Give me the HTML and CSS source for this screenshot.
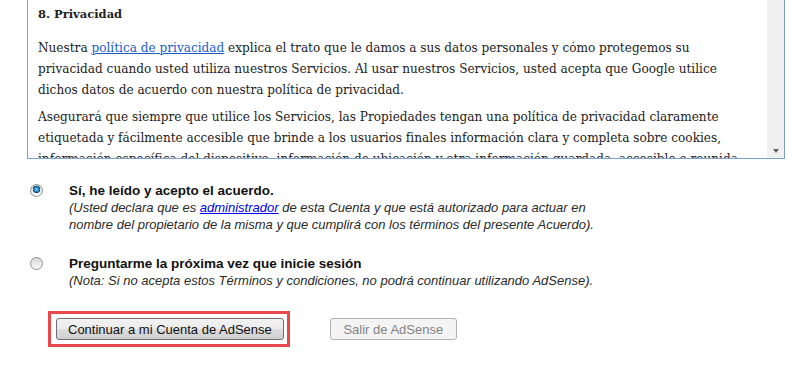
FILE: index.html
```html
<!DOCTYPE html>
<html lang="es">
<head>
    <meta charset="UTF-8">
    <title>Términos y condiciones de AdSense</title>
    <link rel="stylesheet" href="styles.css">
</head>
<body>

<div class="terms">
    <div class="terms-text">
        <h3>8. Privacidad</h3>
        <p>Nuestra <a href="#">política de privacidad</a> explica el trato que le damos a sus datos personales y cómo protegemos su<br>
        privacidad cuando usted utiliza nuestros Servicios. Al usar nuestros Servicios, usted acepta que Google utilice<br>
        dichos datos de acuerdo con nuestra política de privacidad.</p>
        <p>Asegurará que siempre que utilice los Servicios, las Propiedades tengan una política de privacidad claramente<br>
        etiquetada y fácilmente accesible que brinde a los usuarios finales información clara y completa sobre cookies,<br>
        información específica del dispositivo, información de ubicación y otra información guardada, accesible o reunida</p>
    </div>
    <div class="scrollbar"><span class="arrow-down"></span></div>
</div>

<form class="accept">
    <label class="option">
        <input type="radio" name="agree" class="radio" checked>
        <span class="option-text">
            <strong>Sí, he leído y acepto el acuerdo.</strong>
            <em>(Usted declara que es <a href="#">administrador</a> de esta Cuenta y que está autorizado para actuar en<br>
            nombre del propietario de la misma y que cumplirá con los términos del presente Acuerdo).</em>
        </span>
    </label>
    <label class="option">
        <input type="radio" name="agree" class="radio">
        <span class="option-text">
            <strong>Preguntarme la próxima vez que inicie sesión</strong>
            <em>(Nota: Si no acepta estos Términos y condiciones, no podrá continuar utilizando AdSense).</em>
        </span>
    </label>

    <div class="actions">
        <div class="highlight">
            <button type="button" class="btn">Continuar a mi Cuenta de AdSense</button>
        </div>
        <button type="button" class="btn" disabled>Salir de AdSense</button>
    </div>
</form>

</body>
</html>
```

FILE: styles.css
```css
body {
    margin: 0;
    background-color: #ffffff;
    font-family: "Liberation Sans", Arial, sans-serif;
    color: #222222;
}
.terms {
    display: flex;
    width: 758px;
    height: 160px;
    margin: -1px 0 0 27px;
    box-sizing: border-box;
    border: 1px solid #7d9fd2;
    overflow: hidden;
}
.terms-text {
    flex: 1;
    padding: 0 10px;
    overflow: hidden;
    font-family: "DejaVu Serif", Cambria, serif;
    font-size: 12.1px;
    line-height: 21px;
    color: #222222;
}
.terms-text h3 {
    margin: 4px 0 14px;
    font-size: 11.5px;
    line-height: 20px;
}
.terms-text p {
    margin: 0 0 6px;
    white-space: nowrap;
}
.terms-text a {
    color: #1a5dc9;
}
.scrollbar {
    display: flex;
    flex-direction: column;
    justify-content: flex-end;
    align-items: center;
    width: 17px;
    padding-bottom: 5px;
    box-sizing: border-box;
    background-color: #f0f0f0;
}
.arrow-down {
    width: 0;
    height: 0;
    border-left: 3.5px solid transparent;
    border-right: 3.5px solid transparent;
    border-top: 4px solid #5f5f5f;
}
.accept {
    margin: 23px 0 0;
}
.option {
    display: flex;
    align-items: flex-start;
    gap: 26px;
    padding-left: 30px;
    margin-bottom: 22px;
}
.radio {
    appearance: none;
    flex: none;
    width: 13px;
    height: 13px;
    margin: 2px 0 0;
    border: 1px solid #8e8f8f;
    border-radius: 50%;
    box-sizing: border-box;
    background: linear-gradient(#d6d6d6, #fbfbfb);
}
.radio:checked {
    background:
        radial-gradient(circle at 50% 40%, #8fdcf8 0, #2a8cc8 2px, #114a7e 3.5px, transparent 4px),
        linear-gradient(#d6d6d6, #fbfbfb);
}
.option-text {
    display: flex;
    flex-direction: column;
}
.option-text strong {
    font-size: 13.5px;
    line-height: 17px;
    color: #111111;
}
.option-text em {
    font-size: 13px;
    line-height: 17px;
    color: #2a2a2a;
}
.option-text a {
    color: #0000ee;
}
.actions {
    display: flex;
    align-items: center;
    gap: 40px;
    margin: 15px 0 0 48px;
}
.highlight {
    display: flex;
    padding: 4px 3px 4px 5px;
    border: 3px solid #e8484a;
}
.btn {
    height: 22px;
    padding: 0 11px;
    font-family: "Liberation Sans", Arial, sans-serif;
    font-size: 13px;
    color: #111111;
    border: 1px solid #707070;
    border-radius: 3px;
    background: linear-gradient(#f2f2f2 0, #ebebeb 50%, #dddddd 51%, #cfcfcf 100%);
}
.btn:disabled {
    width: 127px;
    color: #838383;
    border-color: #adb2b5;
    background: #f4f4f4;
}
```
